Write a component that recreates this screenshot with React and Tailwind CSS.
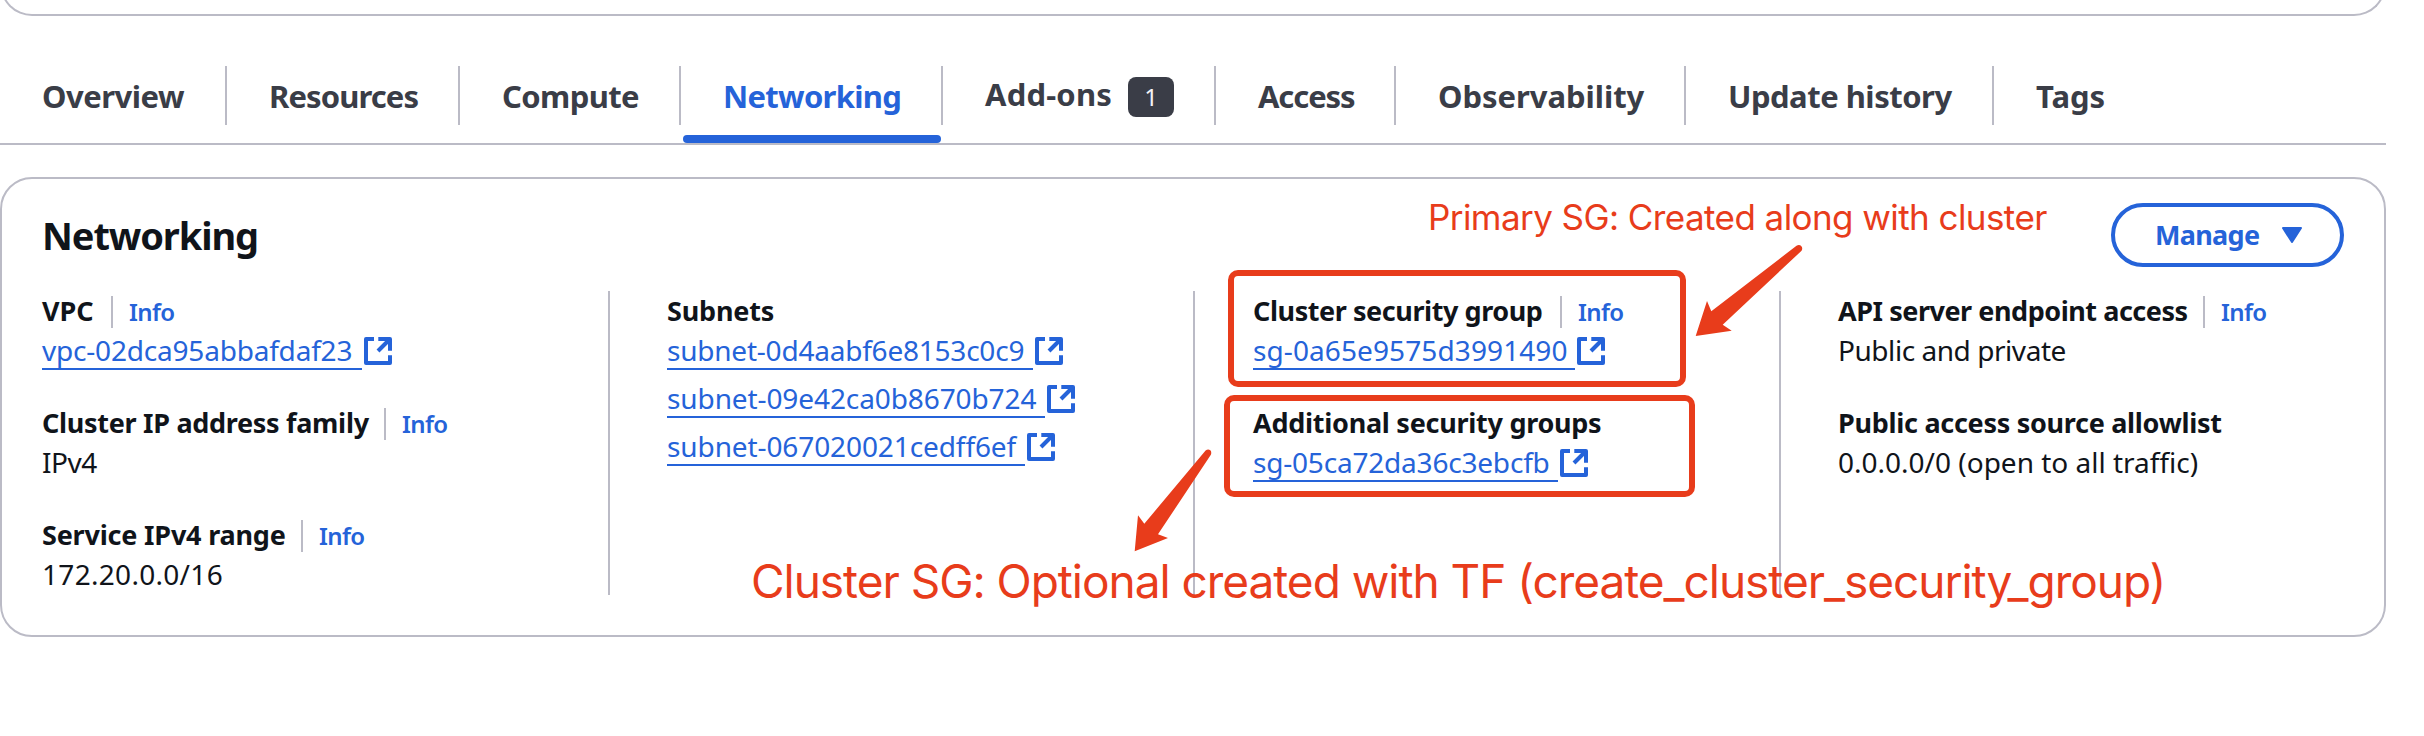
const TABS = [
  { name: "Overview", box: "w-[227px]", text: "tracking-[-0.5px]" },
  { name: "Resources", box: "w-[233px]", text: "tracking-[-0.9px]" },
  { name: "Compute", box: "w-[221px]", text: "tracking-[-0.6px]" },
  { name: "Networking", box: "w-[262px]", text: "tracking-[-0.7px]", active: true },
  { name: "Add-ons", box: "w-[273px]", text: "tracking-[0.2px]", badge: "1" },
  { name: "Access", box: "w-[180px]", text: "tracking-[-1.1px]" },
  { name: "Observability", box: "w-[290px]", text: "tracking-[-0.05px]" },
  { name: "Update history", box: "w-[308px]", text: "tracking-[-0.5px]" },
  { name: "Tags", box: "w-[392px]", text: "", last: true },
];

function Tab({ tab }) {
  return (
    <div className={`relative flex h-[77px] shrink-0 flex-col ${tab.box}`}>
      <div
        className={`flex h-[59px] border-[#bbbbc6] pl-[42px] ${tab.last ? "" : "border-r-2"} ${
          tab.badge ? "pt-[8px]" : "pt-[10px]"
        }`}
      >
        <span
          className={`text-[31px] leading-10 font-[680] whitespace-nowrap ${tab.text} ${
            tab.active ? "text-[#2563d9]" : "text-[#3a3d47]"
          }`}
        >
          {tab.name}
        </span>
        {tab.badge && (
          <span className="mt-[3px] ml-[16px] flex h-10 w-[46px] items-center justify-center rounded-lg bg-[#3a3d47] text-2xl leading-10 text-[#f3f3f7]">
            {tab.badge}
          </span>
        )}
      </div>
      {tab.active && <div className="mt-[10px] ml-[2px] h-2 w-[258px] rounded bg-[#2563d9]" />}
    </div>
  );
}

function ExternalIcon() {
  return (
    <svg className="mt-[7px] ml-[2px] h-7 w-7 shrink-0" viewBox="0 0 28 28" fill="none" stroke="#2563d9" strokeWidth="4" strokeLinejoin="round">
      <path d="M10 2H2v24h24v-7.7" />
      <path d="M14.3 2H26v11.7" />
      <path d="M25.5 2.5 14 14" />
    </svg>
  );
}

function ResourceLink({ children, className }) {
  return (
    <div className="flex h-10">
      <a className={`block h-10 shrink-0 border-b-2 border-[#2563d9] leading-10 whitespace-nowrap text-[#2563d9] ${className}`}>
        {children}
      </a>
      <ExternalIcon />
    </div>
  );
}

function Field({ label, labelClass = "", info, children }) {
  return (
    <div className="mb-[33px]">
      <div className="flex h-[39px]">
        <span className={`shrink-0 text-[27px] leading-[40px] font-bold whitespace-nowrap ${labelClass}`}>{label}</span>
        {info && (
          <span className="mt-[5px] h-8 border-l-2 border-[#bbbbc6] pl-4 text-2xl leading-[31px] font-[650] tracking-[-0.6px] text-[#2563d9]">
            Info
          </span>
        )}
      </div>
      {children}
    </div>
  );
}

function Value({ children, className = "" }) {
  return <div className={`h-10 leading-10 whitespace-nowrap ${className}`}>{children}</div>;
}

function Annotations() {
  return (
    <>
      <div className="absolute top-[270px] left-[1228px] h-[117px] w-[458px] rounded-[10px] border-[6px] border-[#e83c1b]" />
      <div className="absolute top-[395px] left-[1224px] h-[102px] w-[471px] rounded-[10px] border-[6px] border-[#e83c1b]" />
      <svg className="absolute top-0 left-0 h-[736px] w-[2424px]" viewBox="0 0 2424 736" fill="#e83c1b">
        <path d="M1796.5 245.7Q1799.5 244 1801.6 246.5Q1803 249 1801.3 251L1722.7 324.7L1731.7 330.7L1695.7 336L1707 301L1711.3 311.3Z" />
        <path d="M1205.6 450.6Q1208 448.5 1210.3 450.2Q1212 452 1210.7 455L1158 534.3L1168 538L1134.7 551.3L1138 515.3L1144.3 523.7Z" />
      </svg>
      <div className="absolute top-[195px] left-[1428px] font-['Inter',sans-serif] text-[35px] leading-[44px] tracking-[-0.57px] whitespace-nowrap text-[#e83c1b]">
        Primary SG: Created along with cluster
      </div>
      <div className="absolute top-[553px] left-[751px] font-['Inter',sans-serif] text-[46px] leading-[56px] tracking-[-1.03px] whitespace-nowrap text-[#e83c1b]">
        Cluster SG: Optional created with TF (create_cluster_security_group)
      </div>
    </>
  );
}

export default function App() {
  return (
    <div className="relative h-[736px] w-[2424px] overflow-hidden bg-white font-['Noto_Sans',sans-serif] text-[28px] text-[#10141a]">
      <div className="h-4 w-[2386px] overflow-hidden">
        <div className="-mt-16 h-20 rounded-b-[32px] border-2 border-t-0 border-[#bbbbc6]" />
      </div>

      <nav className="mt-[50px] flex h-[79px] w-[2386px] border-b-2 border-[#bbbbc6]">
        {TABS.map((tab) => (
          <Tab key={tab.name} tab={tab} />
        ))}
      </nav>

      <section className="mt-8 h-[460px] w-[2386px] rounded-[32px] border-2 border-[#bbbbc6]">
        <header className="flex h-28 items-start justify-between pr-10 pl-10">
          <h2 className="mt-[30px] text-[38px] leading-[52px] font-bold tracking-[-1.1px]">Networking</h2>
          <button className="mt-6 flex h-16 w-[233px] items-center rounded-full border-4 border-[#2563d9] pl-10 text-[27px] leading-10 font-bold tracking-[-0.7px] text-[#2563d9]">
            Manage
            <svg className="ml-[23px] h-4 w-5" viewBox="0 0 20 16" fill="#2563d9" stroke="#2563d9" strokeWidth="2" strokeLinejoin="round">
              <path d="M1 1H19L10 15Z" />
            </svg>
          </button>
        </header>

        <div className="flex h-[304px] font-[450]">
          <div className="w-[608px] border-r-2 border-[#bbbbc6] pl-10">
            <Field label="VPC" labelClass="w-[69px]" info>
              <ResourceLink className="w-[320px] tracking-[-0.2px]">vpc-02dca95abbafdaf23</ResourceLink>
            </Field>
            <Field label="Cluster IP address family" labelClass="w-[342px] tracking-[-0.3px]" info>
              <Value className="tracking-[-0.5px]">IPv4</Value>
            </Field>
            <Field label="Service IPv4 range" labelClass="w-[259px] tracking-[-0.2px]" info>
              <Value className="tracking-[0.3px]">172.20.0.0/16</Value>
            </Field>
          </div>

          <div className="w-[585px] border-r-2 border-[#bbbbc6] pl-[57px]">
            <Field label="Subnets" labelClass="tracking-[-0.2px]">
              <div className="flex flex-col gap-2">
                <ResourceLink className="w-[366px] tracking-[-0.22px]">subnet-0d4aabf6e8153c0c9</ResourceLink>
                <ResourceLink className="w-[378px] tracking-[-0.1px]">subnet-09e42ca0b8670b724</ResourceLink>
                <ResourceLink className="w-[358px] tracking-[-0.1px]">subnet-067020021cedff6ef</ResourceLink>
              </div>
            </Field>
          </div>

          <div className="w-[586px] border-r-2 border-[#bbbbc6] pl-[58px]">
            <Field label="Cluster security group" labelClass="w-[307px] tracking-[-0.43px]" info>
              <ResourceLink className="w-[322px] tracking-[0.1px]">sg-0a65e9575d3991490</ResourceLink>
            </Field>
            <Field label="Additional security groups" labelClass="tracking-[-0.27px]">
              <ResourceLink className="w-[305px] tracking-[-0.2px]">sg-05ca72da36c3ebcfb</ResourceLink>
            </Field>
          </div>

          <div className="pl-[57px]">
            <Field label="API server endpoint access" labelClass="w-[365px] tracking-[-0.46px]" info>
              <Value className="tracking-[-0.45px]">Public and private</Value>
            </Field>
            <Field label="Public access source allowlist" labelClass="tracking-[-0.29px]">
              <Value>0.0.0.0/0 (open to all traffic)</Value>
            </Field>
          </div>
        </div>
      </section>

      <Annotations />
    </div>
  );
}
